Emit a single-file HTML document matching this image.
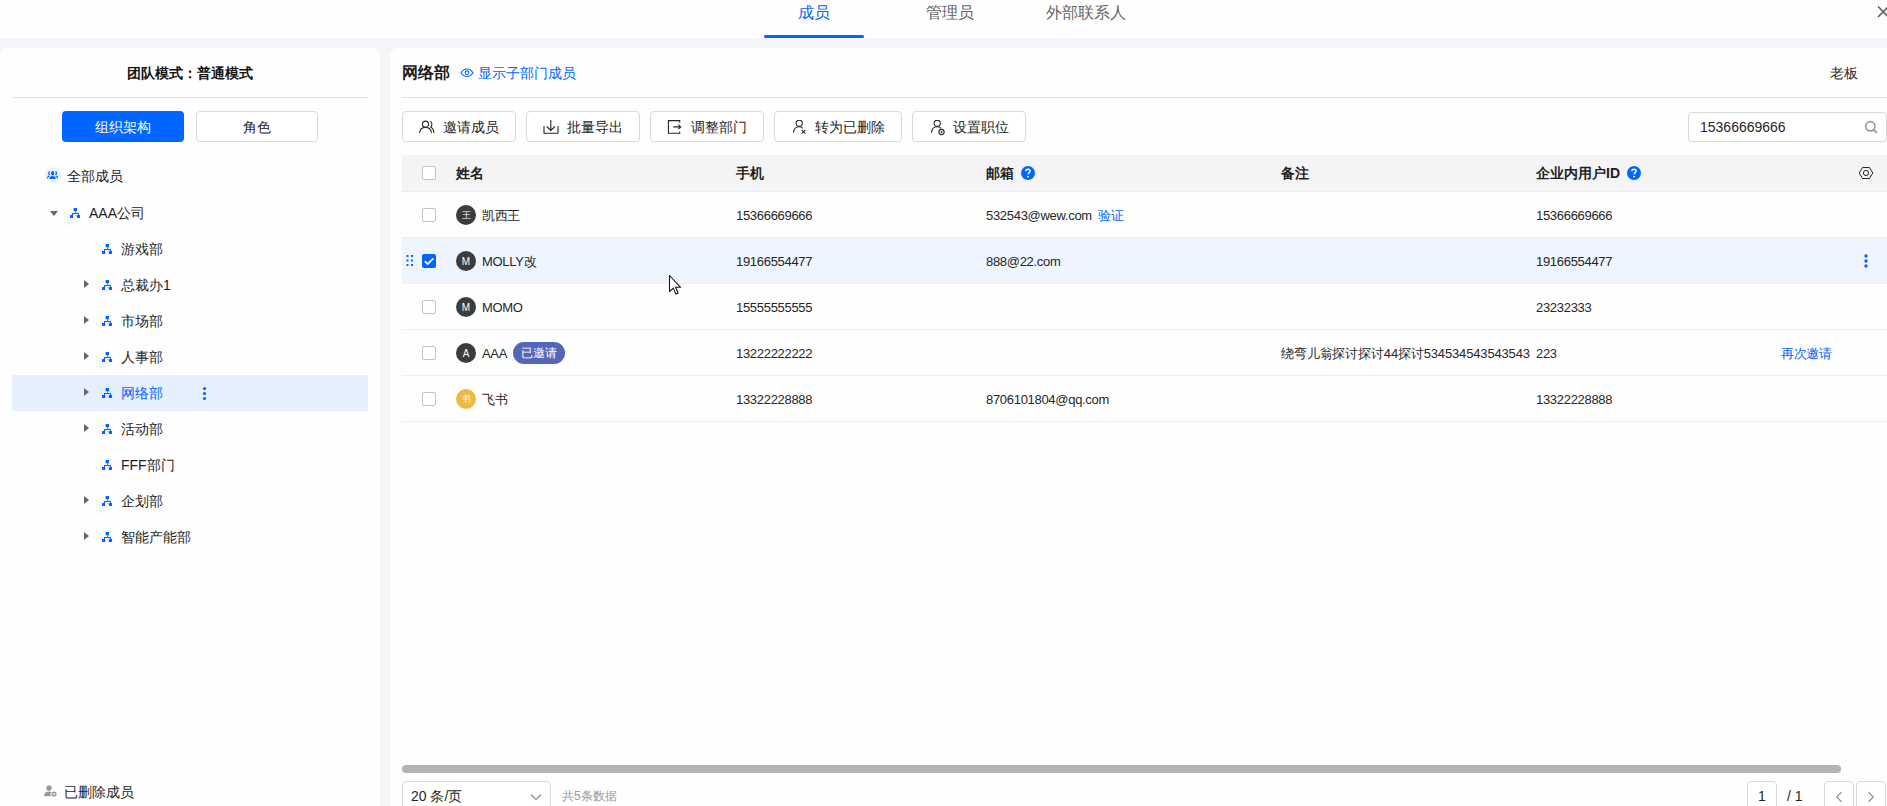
<!DOCTYPE html>
<html><head><meta charset="utf-8">
<style>
*{box-sizing:border-box;margin:0;padding:0}
html,body{width:1887px;height:806px;overflow:hidden}
body{position:relative;background:#f4f5f8;font-family:"Liberation Sans",sans-serif;color:#1f1f1f;font-size:14px}
.a{position:absolute;white-space:nowrap}
.top{left:0;top:0;width:1887px;height:38px;background:#fefefe}
.tab{top:3px;font-size:16px;line-height:20px;color:#646464}
.panel{background:#fefefe;border-radius:8px 8px 0 0}
.btn{border:1px solid #d9d9d9;border-radius:4px;background:#fff}
.tb{height:31px;top:111px;border:1px solid #dadada;border-radius:4px;background:#fff}
.tb svg{position:absolute;left:16px;top:8px}
.tb span{position:absolute;left:40px;top:5px;font-size:14px;line-height:20px;color:#262626}
.tree{font-size:14px;line-height:20px;color:#1f1f1f}
.org{position:absolute;width:10px;height:10px}
.car{position:absolute;width:0;height:0;border-top:4.8px solid transparent;border-bottom:4.8px solid transparent;border-left:5.7px solid #6b6461}
.th{font-size:14px;font-weight:bold;line-height:20px;top:163px;color:#1f1f1f}
.cb{position:absolute;width:14px;height:14px;border:1px solid #c4c4c4;border-radius:2px;background:#fff}
.td{font-size:13px;line-height:20px;color:#262626;letter-spacing:-0.3px}
.av{position:absolute;width:20px;height:20px;border-radius:50%;background:#3c3c3c;color:#fff;font-size:10px;line-height:21px;text-align:center}
.hl{position:absolute;height:1px;background:#efefef}
</style></head><body>
<div class="a top"></div>
<div class="a tab" style="left:798px;color:#0066ff">成员</div>
<div class="a" style="left:764px;top:35px;width:100px;height:3px;background:#0066ff;border-radius:2px"></div>
<div class="a tab" style="left:926px">管理员</div>
<div class="a tab" style="left:1046px">外部联系人</div>
<svg class="a" style="left:1876px;top:5px" width="14" height="14" viewBox="0 0 14 14"><path d="M2 1.5L12.5 12M2 12L12.5 1.5" stroke="#666" stroke-width="1.6" fill="none"/></svg>

<!-- left panel -->
<div class="a panel" style="left:0;top:48px;width:380px;height:758px"></div>
<div class="a" style="left:127px;top:63px;font-size:14px;line-height:20px;font-weight:bold;color:#141414">团队模式：普通模式</div>
<div class="a" style="left:12px;top:97px;width:356px;height:1px;background:#e3e3e3"></div>
<div class="a" style="left:62px;top:111px;width:122px;height:31px;background:#0066ff;border-radius:4px"></div>
<div class="a" style="left:95px;top:117px;font-size:14px;line-height:20px;color:#fff">组织架构</div>
<div class="a btn" style="left:196px;top:111px;width:122px;height:31px"></div>
<div class="a" style="left:243px;top:117px;font-size:14px;line-height:20px;color:#262626">角色</div>

<!-- tree -->
<div class="a" style="left:45px;top:167px;width:16px;height:16px;border-radius:50%;background:#eaf2ff"></div>
<svg class="a" style="left:47px;top:169px" width="12" height="12" viewBox="0 0 12 12"><ellipse cx="5.6" cy="4.3" rx="1.6" ry="2.2" fill="#0066ff"/><path d="M2.4 10c0-2 1.3-3 3.2-3s3.2 1 3.2 3z" fill="#0066ff"/><path d="M2.4 2.8c-.7.7-.7 2 0 2.8M8.8 2.8c.7.7.7 2 0 2.8M.6 8.8c.2-.9.8-1.5 1.5-1.7M10.6 8.8c-.2-.9-.8-1.5-1.5-1.7" stroke="#0066ff" stroke-width="1.2" fill="none" stroke-linecap="round"/></svg>
<div class="a tree" style="left:67px;top:166px">全部成员</div>

<div class="a" style="left:12px;top:375px;width:356px;height:36px;background:#e6effd"></div>
<div class="a" style="left:50px;top:211px;width:0;height:0;border-left:4.8px solid transparent;border-right:4.8px solid transparent;border-top:5.2px solid #6b6461"></div>
<svg class="a" style="left:70px;top:208px" width="10" height="10" viewBox="0 0 10 10"><path d="M3.6 0h3.4v3.2H3.6zM5 3h.7v2H5zM2 5h7v1H2zM2 5.5h1v2H2zM8 5.5h1v2H8zM0 7h3.2v3H0zM6.8 7H10v3H6.8z" fill="#0066ff"/></svg>
<div class="a tree" style="left:89px;top:203px">AAA公司</div>
<svg class="a" style="left:102px;top:244px" width="10" height="10" viewBox="0 0 10 10"><path d="M3.6 0h3.4v3.2H3.6zM5 3h.7v2H5zM2 5h7v1H2zM2 5.5h1v2H2zM8 5.5h1v2H8zM0 7h3.2v3H0zM6.8 7H10v3H6.8z" fill="#0066ff"/></svg>
<div class="a tree" style="left:121px;top:239px">游戏部</div>
<div class="car" style="left:84px;top:280.2px"></div>
<svg class="a" style="left:102px;top:280px" width="10" height="10" viewBox="0 0 10 10"><path d="M3.6 0h3.4v3.2H3.6zM5 3h.7v2H5zM2 5h7v1H2zM2 5.5h1v2H2zM8 5.5h1v2H8zM0 7h3.2v3H0zM6.8 7H10v3H6.8z" fill="#0066ff"/></svg>
<div class="a tree" style="left:121px;top:275px">总裁办1</div>
<div class="car" style="left:84px;top:316.2px"></div>
<svg class="a" style="left:102px;top:316px" width="10" height="10" viewBox="0 0 10 10"><path d="M3.6 0h3.4v3.2H3.6zM5 3h.7v2H5zM2 5h7v1H2zM2 5.5h1v2H2zM8 5.5h1v2H8zM0 7h3.2v3H0zM6.8 7H10v3H6.8z" fill="#0066ff"/></svg>
<div class="a tree" style="left:121px;top:311px">市场部</div>
<div class="car" style="left:84px;top:352.2px"></div>
<svg class="a" style="left:102px;top:352px" width="10" height="10" viewBox="0 0 10 10"><path d="M3.6 0h3.4v3.2H3.6zM5 3h.7v2H5zM2 5h7v1H2zM2 5.5h1v2H2zM8 5.5h1v2H8zM0 7h3.2v3H0zM6.8 7H10v3H6.8z" fill="#0066ff"/></svg>
<div class="a tree" style="left:121px;top:347px">人事部</div>
<div class="car" style="left:84px;top:388.2px"></div>
<svg class="a" style="left:102px;top:388px" width="10" height="10" viewBox="0 0 10 10"><path d="M3.6 0h3.4v3.2H3.6zM5 3h.7v2H5zM2 5h7v1H2zM2 5.5h1v2H2zM8 5.5h1v2H8zM0 7h3.2v3H0zM6.8 7H10v3H6.8z" fill="#0066ff"/></svg>
<div class="a tree" style="left:121px;top:383px;color:#0066ff">网络部</div>
<div class="car" style="left:84px;top:424.2px"></div>
<svg class="a" style="left:102px;top:424px" width="10" height="10" viewBox="0 0 10 10"><path d="M3.6 0h3.4v3.2H3.6zM5 3h.7v2H5zM2 5h7v1H2zM2 5.5h1v2H2zM8 5.5h1v2H8zM0 7h3.2v3H0zM6.8 7H10v3H6.8z" fill="#0066ff"/></svg>
<div class="a tree" style="left:121px;top:419px">活动部</div>
<svg class="a" style="left:102px;top:460px" width="10" height="10" viewBox="0 0 10 10"><path d="M3.6 0h3.4v3.2H3.6zM5 3h.7v2H5zM2 5h7v1H2zM2 5.5h1v2H2zM8 5.5h1v2H8zM0 7h3.2v3H0zM6.8 7H10v3H6.8z" fill="#0066ff"/></svg>
<div class="a tree" style="left:121px;top:455px">FFF部门</div>
<div class="car" style="left:84px;top:496.2px"></div>
<svg class="a" style="left:102px;top:496px" width="10" height="10" viewBox="0 0 10 10"><path d="M3.6 0h3.4v3.2H3.6zM5 3h.7v2H5zM2 5h7v1H2zM2 5.5h1v2H2zM8 5.5h1v2H8zM0 7h3.2v3H0zM6.8 7H10v3H6.8z" fill="#0066ff"/></svg>
<div class="a tree" style="left:121px;top:491px">企划部</div>
<div class="car" style="left:84px;top:532.2px"></div>
<svg class="a" style="left:102px;top:532px" width="10" height="10" viewBox="0 0 10 10"><path d="M3.6 0h3.4v3.2H3.6zM5 3h.7v2H5zM2 5h7v1H2zM2 5.5h1v2H2zM8 5.5h1v2H8zM0 7h3.2v3H0zM6.8 7H10v3H6.8z" fill="#0066ff"/></svg>
<div class="a tree" style="left:121px;top:527px">智能产能部</div>
<svg class="a" style="left:202px;top:386px" width="5" height="15" viewBox="0 0 5 15"><circle cx="2.5" cy="2.5" r="1.6" fill="#0066ff"/><circle cx="2.5" cy="7.5" r="1.6" fill="#0066ff"/><circle cx="2.5" cy="12.5" r="1.6" fill="#0066ff"/></svg>

<svg class="a" style="left:44px;top:785px" width="13" height="12" viewBox="0 0 13 12"><circle cx="5" cy="3" r="2.7" fill="#9a9a9a"/><path d="M0 11.2c0-3 2-4.6 5-4.6 1 0 1.8.2 2.4.5A3.2 3.2 0 0 0 7 11.2z" fill="#9a9a9a"/><circle cx="10" cy="9" r="2.6" fill="#9a9a9a"/><path d="M8.6 9h2.8" stroke="#fff" stroke-width="1"/></svg>
<div class="a tree" style="left:64px;top:782px;color:#262626">已删除成员</div>

<!-- right panel -->
<div class="a panel" style="left:390px;top:48px;width:1510px;height:758px"></div>
<div class="a" style="left:402px;top:63px;font-size:16px;line-height:20px;font-weight:bold;color:#1a1a1a">网络部</div>
<svg class="a" style="left:460px;top:68px" width="14" height="10" viewBox="0 0 14 10"><path d="M1 4.7C2.6 2.2 4.7 1 7 1s4.4 1.2 6 3.7C11.4 7.2 9.3 8.5 7 8.5S2.6 7.2 1 4.7z" stroke="#0066ff" stroke-width="1.1" fill="none"/><circle cx="7" cy="4.7" r="1.8" stroke="#0066ff" stroke-width="1.1" fill="none"/></svg>
<div class="a" style="left:478px;top:63px;font-size:14px;line-height:20px;color:#0066ff">显示子部门成员</div>
<div class="a" style="left:1830px;top:63px;font-size:14px;line-height:20px;color:#262626">老板</div>
<div class="a" style="left:402px;top:97px;width:1485px;height:1px;background:#e3e3e3"></div>

<!-- toolbar -->
<div class="a tb" style="left:402px;width:114px">
<svg width="18" height="16" viewBox="0 0 18 16"><circle cx="6.5" cy="4.2" r="3.1" stroke="#262626" stroke-width="1.1" fill="none"/><path d="M0.6 13c.3-3.4 2.6-5.6 5.9-5.6s5.6 2.2 5.9 5.6" stroke="#262626" stroke-width="1.1" fill="none"/><path d="M11.3 1.2c1.1.6 1.6 1.8 1.6 3s-.5 2.3-1.3 2.9c1.9.9 3.1 3 3.4 5.9" stroke="#262626" stroke-width="1.1" fill="none"/></svg>
<span>邀请成员</span></div>
<div class="a tb" style="left:526px;width:114px">
<svg width="18" height="16" viewBox="0 0 18 16"><path d="M7.8 0v10.2M3.7 6.5l4.1 4 4.1-4M1 6v7.3h14V6" stroke="#262626" stroke-width="1.1" fill="none"/></svg>
<span>批量导出</span></div>
<div class="a tb" style="left:650px;width:114px">
<svg width="18" height="16" viewBox="0 0 18 16"><path d="M12.7 2.4V.6H1.4v12.6h11.3v-1.8" stroke="#262626" stroke-width="1.1" fill="none"/><path d="M6.3 6.9h7.3M11.4 4.6l2.3 2.3-2.3 2.3" stroke="#262626" stroke-width="1.1" fill="none"/></svg>
<span>调整部门</span></div>
<div class="a tb" style="left:774px;width:128px">
<svg width="18" height="16" viewBox="0 0 18 16"><circle cx="8.2" cy="3.3" r="3.1" stroke="#262626" stroke-width="1.1" fill="none"/><path d="M2.5 12.8c.2-3.6 2.4-6 5.7-6 1.6 0 2.9.6 3.8 1.6" stroke="#262626" stroke-width="1.1" fill="none"/><path d="M10.6 9.9l3.8 3.8M14.4 9.9l-3.8 3.8" stroke="#262626" stroke-width="1.05" fill="none"/></svg>
<span>转为已删除</span></div>
<div class="a tb" style="left:912px;width:114px">
<svg width="18" height="16" viewBox="0 0 18 16"><circle cx="8.2" cy="3.3" r="3.1" stroke="#262626" stroke-width="1.1" fill="none"/><path d="M2.5 12.8c.2-3.6 2.4-6 5.7-6 1.6 0 2.9.6 3.8 1.6" stroke="#262626" stroke-width="1.1" fill="none"/><circle cx="12.5" cy="12" r="2.6" stroke="#262626" stroke-width="1.1" fill="none"/><circle cx="12.5" cy="12" r=".9" fill="#262626"/></svg>
<span>设置职位</span></div>
<div class="a" style="left:1688px;top:112px;width:199px;height:30px;border:1px solid #d9d9d9;border-radius:4px;background:#fff"></div>
<div class="a" style="left:1700px;top:117px;font-size:14px;line-height:20px;color:#262626">15366669666</div>
<svg class="a" style="left:1864px;top:120px" width="14" height="14" viewBox="0 0 14 14"><circle cx="6.3" cy="6.3" r="4.6" stroke="#999" stroke-width="1.7" fill="none"/><path d="M9.8 9.8l2.6 2.6" stroke="#999" stroke-width="1.8" stroke-linecap="round"/></svg>

<div class="a" style="left:402px;top:155px;width:1485px;height:37px;background:#f4f4f6"></div>
<div class="a" style="left:402px;top:191px;width:1485px;height:1px;background:#ececee"></div>
<div class="cb" style="left:422px;top:166px"></div>
<div class="a th" style="left:456px">姓名</div>
<div class="a th" style="left:736px">手机</div>
<div class="a th" style="left:986px">邮箱</div>
<svg class="a" style="left:1021px;top:166px" width="14" height="14" viewBox="0 0 14 14"><circle cx="7" cy="7" r="7" fill="#0066ff"/><path d="M4.9 5.3c0-1.3.9-2.1 2.1-2.1s2.1.8 2.1 1.9c0 1.5-1.9 1.6-1.9 3.1" stroke="#fff" stroke-width="1.5" fill="none"/><circle cx="7.1" cy="10.6" r=".95" fill="#fff"/></svg>
<div class="a th" style="left:1281px">备注</div>
<div class="a th" style="left:1536px">企业内用户ID</div>
<svg class="a" style="left:1627px;top:166px" width="14" height="14" viewBox="0 0 14 14"><circle cx="7" cy="7" r="7" fill="#0066ff"/><path d="M4.9 5.3c0-1.3.9-2.1 2.1-2.1s2.1.8 2.1 1.9c0 1.5-1.9 1.6-1.9 3.1" stroke="#fff" stroke-width="1.5" fill="none"/><circle cx="7.1" cy="10.6" r=".95" fill="#fff"/></svg>
<svg class="a" style="left:1858px;top:166px" width="17" height="14" viewBox="0 0 17 14"><path d="M4.6 1.5h6.8l3.4 5.5-3.4 5.5H4.6L1.2 7z" stroke="#262626" stroke-width="1" fill="none"/><circle cx="8" cy="7" r="2.6" stroke="#262626" stroke-width="1" fill="none"/></svg>
<div class="hl" style="left:402px;top:237px;width:1485px"></div>
<div class="cb" style="left:422px;top:208px"></div>
<div class="av" style="left:456px;top:205px;background:#3c3c3c;font-size:9px">王</div>
<div class="a td" style="left:482px;top:206px">凯西王</div>
<div class="a td" style="left:736px;top:206px">15366669666</div>
<div class="a td" style="left:986px;top:206px">532543@wew.com</div>
<div class="a td" style="left:1098px;top:206px;color:#0066ff">验证</div>
<div class="a td" style="left:1536px;top:206px">15366669666</div>
<div class="a" style="left:402px;top:238px;width:1485px;height:46px;background:#eff5fe"></div>
<div class="hl" style="left:402px;top:283px;width:1485px"></div>
<svg class="a" style="left:406px;top:254px" width="8" height="13" viewBox="0 0 8 13"><g fill="#0066ff"><rect x="0.5" y="1" width="2" height="2"/><rect x="5" y="1" width="2" height="2"/><rect x="0.5" y="5.5" width="2" height="2"/><rect x="5" y="5.5" width="2" height="2"/><rect x="0.5" y="10" width="2" height="2"/><rect x="5" y="10" width="2" height="2"/></g></svg>
<svg class="a" style="left:422px;top:254px" width="14" height="14" viewBox="0 0 14 14"><rect width="14" height="14" rx="2" fill="#0066ff"/><path d="M2.8 7.2l2.9 2.9 5.6-5.8" stroke="#fff" stroke-width="1.7" fill="none"/></svg>
<div class="av" style="left:456px;top:251px;background:#3c3c3c;font-size:10px">M</div>
<div class="a td" style="left:482px;top:252px">MOLLY改</div>
<div class="a td" style="left:736px;top:252px">19166554477</div>
<div class="a td" style="left:986px;top:252px">888@22.com</div>
<div class="a td" style="left:1536px;top:252px">19166554477</div>
<svg class="a" style="left:1864px;top:254px" width="5" height="14" viewBox="0 0 5 14"><circle cx="2" cy="2" r="1.7" fill="#0066ff"/><circle cx="2" cy="7" r="1.7" fill="#0066ff"/><circle cx="2" cy="12" r="1.7" fill="#0066ff"/></svg>
<div class="hl" style="left:402px;top:329px;width:1485px"></div>
<div class="cb" style="left:422px;top:300px"></div>
<div class="av" style="left:456px;top:297px;background:#3c3c3c;font-size:10px">M</div>
<div class="a td" style="left:482px;top:298px">MOMO</div>
<div class="a td" style="left:736px;top:298px">15555555555</div>
<div class="a td" style="left:1536px;top:298px">23232333</div>
<div class="hl" style="left:402px;top:375px;width:1485px"></div>
<div class="cb" style="left:422px;top:346px"></div>
<div class="av" style="left:456px;top:343px;background:#3c3c3c;font-size:10px">A</div>
<div class="a td" style="left:482px;top:344px">AAA</div>
<div class="a" style="left:513px;top:342px;width:52px;height:22px;border-radius:11px;background:#5565b9;color:#fff;font-size:12px;line-height:22px;text-align:center">已邀请</div>
<div class="a td" style="left:736px;top:344px">13222222222</div>
<div class="a td" style="left:1281px;top:344px;letter-spacing:-0.15px">绕弯儿翁探讨探讨44探讨534534543543543</div>
<div class="a td" style="left:1536px;top:344px">223</div>
<div class="a td" style="left:1781px;top:344px;color:#0066ff">再次邀请</div>
<div class="hl" style="left:402px;top:421px;width:1485px"></div>
<div class="cb" style="left:422px;top:392px"></div>
<div class="av" style="left:456px;top:389px;background:#f0b840;font-size:9px">书</div>
<div class="a td" style="left:482px;top:390px">飞书</div>
<div class="a td" style="left:736px;top:390px">13322228888</div>
<div class="a td" style="left:986px;top:390px">8706101804@qq.com</div>
<div class="a td" style="left:1536px;top:390px">13322228888</div>
<svg class="a" style="left:668px;top:274px" width="14" height="21" viewBox="0 0 14 21"><path d="M1.5 1.5v16l3.8-3.4 2.6 5.9 2.2-1-2.6-5.7h5.1z" fill="#fff" stroke="#111" stroke-width="1.05" stroke-linejoin="round"/></svg>
<div class="a" style="left:402px;top:765px;width:1439px;height:8px;border-radius:4px;background:#b4b4b4"></div>
<div class="a" style="left:402px;top:781px;width:149px;height:40px;border:1px solid #d9d9d9;border-radius:4px;background:#fff"></div>
<div class="a" style="left:411px;top:786px;font-size:14px;line-height:20px;color:#262626">20 条/页</div>
<svg class="a" style="left:530px;top:793px" width="12" height="8" viewBox="0 0 12 8"><path d="M1 1.5l5 5 5-5" stroke="#8c8c8c" stroke-width="1.2" fill="none"/></svg>
<div class="a" style="left:562px;top:786px;font-size:12px;line-height:20px;color:#9a9a9a">共5条数据</div>
<div class="a" style="left:1747px;top:781px;width:30px;height:40px;border:1px solid #d9d9d9;border-radius:4px;background:#fff"></div>
<div class="a" style="left:1758px;top:786px;font-size:14px;line-height:20px;color:#262626">1</div>
<div class="a" style="left:1787px;top:786px;font-size:14px;line-height:20px;color:#262626">/ 1</div>
<div class="a" style="left:1824px;top:781px;width:30px;height:40px;border:1px solid #d9d9d9;border-radius:4px;background:#fff"></div>
<div class="a" style="left:1856px;top:781px;width:30px;height:40px;border:1px solid #d9d9d9;border-radius:4px;background:#fff"></div>
<svg class="a" style="left:1834px;top:791px" width="10" height="12" viewBox="0 0 10 12"><path d="M7.5 1.2L2.8 6l4.7 4.8" stroke="#8c8c8c" stroke-width="1.2" fill="none"/></svg>
<svg class="a" style="left:1866px;top:791px" width="10" height="12" viewBox="0 0 10 12"><path d="M2.5 1.2L7.2 6l-4.7 4.8" stroke="#8c8c8c" stroke-width="1.2" fill="none"/></svg>
</body></html>
